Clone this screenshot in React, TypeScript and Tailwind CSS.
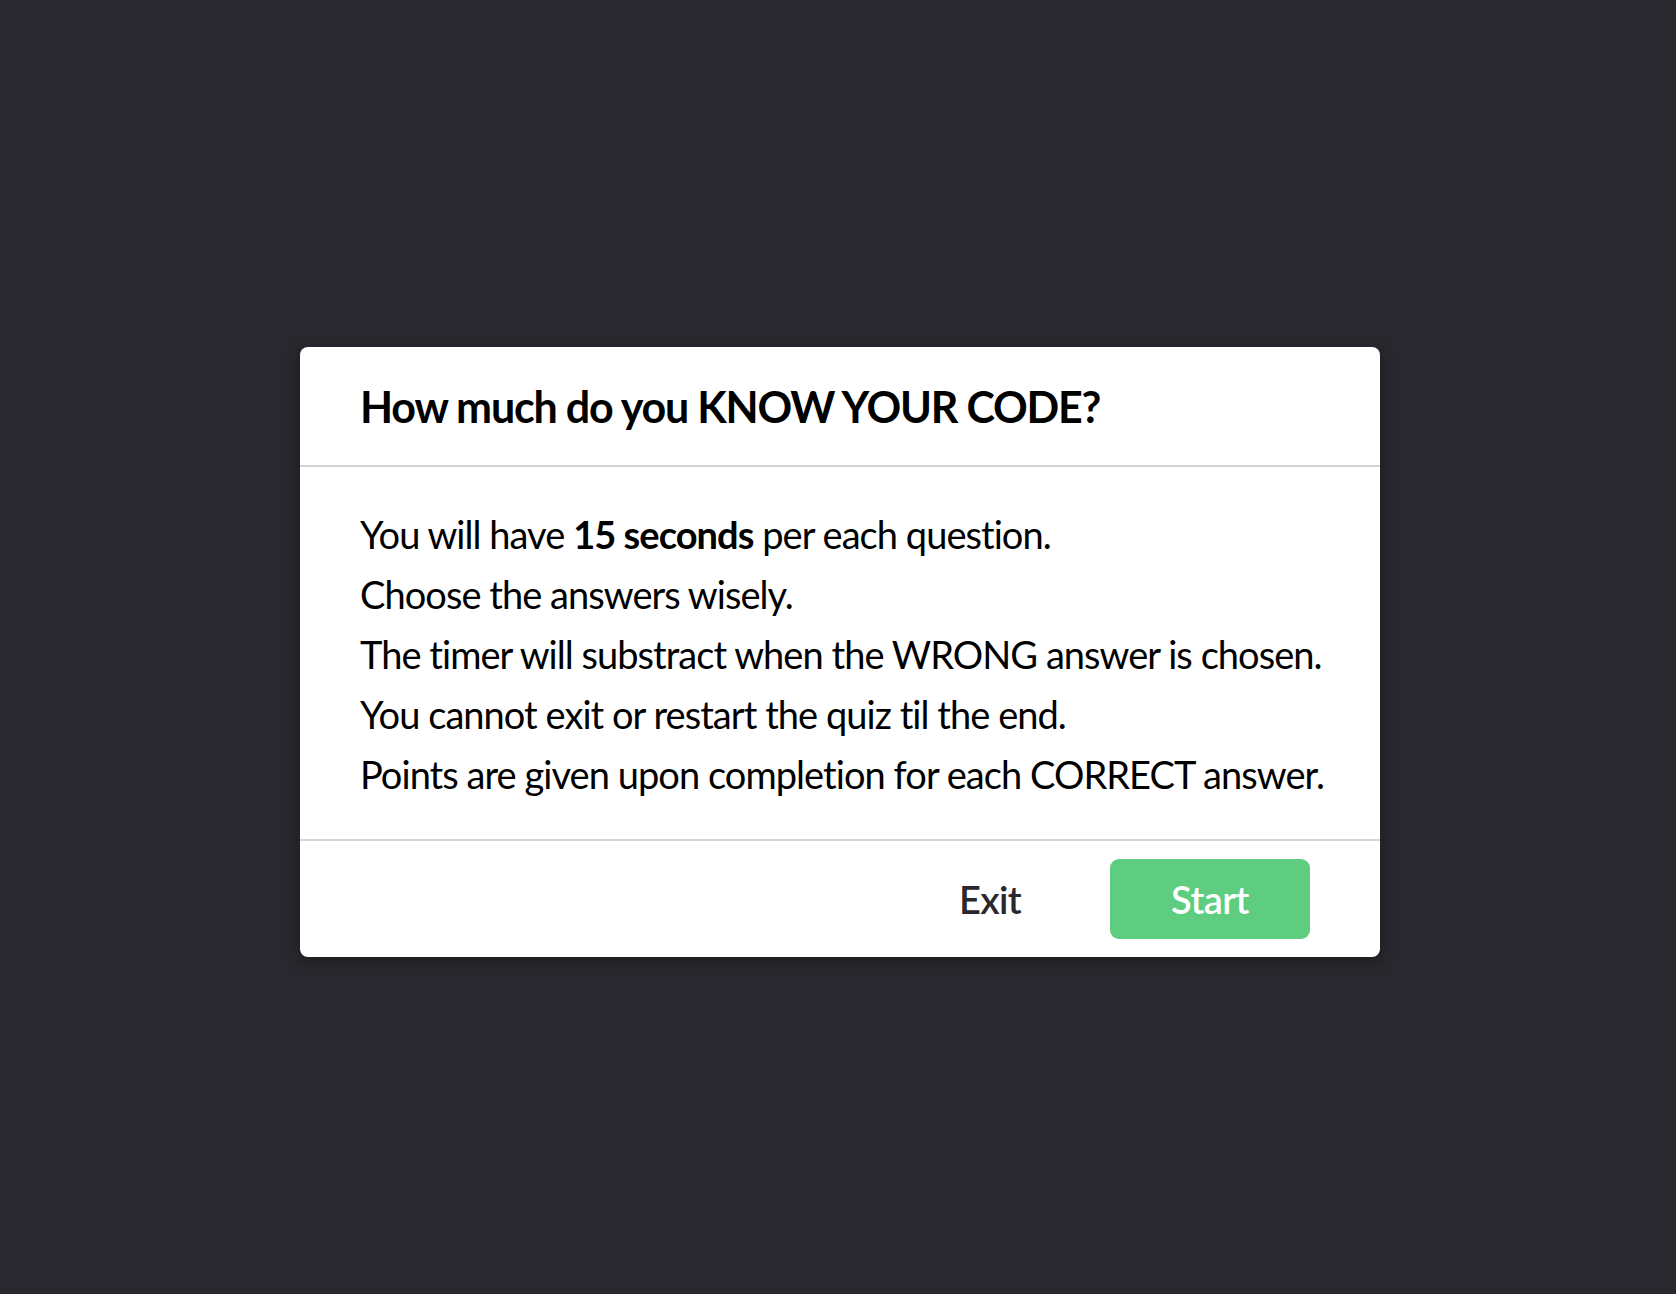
export default function App() {
  return (
    <div className="min-h-[1294px] w-full bg-[#29282e] pt-[347px] pl-[4px] flex justify-center items-start [font-variant-ligatures:none]" style={{ fontFamily: 'Lato, "Noto Sans", sans-serif' }}>
      <div className="w-[1080px] bg-white rounded-[8px] shadow-[0_4px_14px_rgba(0,0,0,0.35)] overflow-hidden">
        <div className="h-[120px] border-b-2 border-[#d4d4d4] px-[60px] flex items-center">
          <h1 className="text-[43px] font-bold text-black leading-none tracking-[-1.2px] whitespace-nowrap">How much do you KNOW YOUR CODE?</h1>
        </div>
        <div className="px-[60px] pt-[37px] pb-[35px] text-[38px] leading-[60px] text-black tracking-[-0.95px] whitespace-nowrap">
          <p>You will have <b>15 seconds</b> per each question.</p>
          <p>Choose the answers wisely.</p>
          <p>The timer will substract when the WRONG answer is chosen.</p>
          <p>You cannot exit or restart the quiz til the end.</p>
          <p>Points are given upon completion for each CORRECT answer.</p>
        </div>
        <div className="border-t-2 border-[#d4d4d4] h-[118px] pr-[70px] flex items-center justify-end gap-[20px]">
          <button className="w-[200px] h-[80px] rounded-[9px] text-[38px] font-semibold text-[#29282e] tracking-[-0.6px]">Exit</button>
          <button className="w-[200px] h-[80px] rounded-[9px] bg-[#5fcd80] text-[38px] font-semibold text-white tracking-[-0.6px]">Start</button>
        </div>
      </div>
    </div>
  );
}
